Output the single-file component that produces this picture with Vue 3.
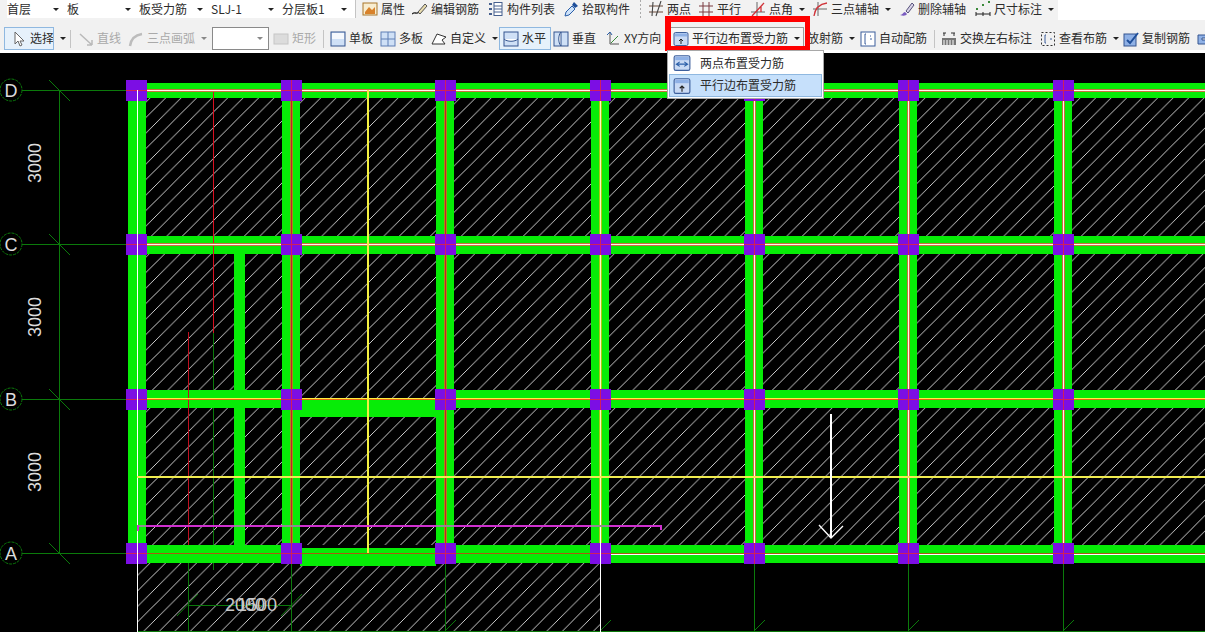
<template>
  <div class="page">
    <div class="row row1">
      <template v-for="(it, i) in row1" :key="i">
        <div v-if="it.sep" class="sep" :class="it.sep" :style="{ width: it.w + 'px' }"></div>
        <div v-else class="item" :class="{ combo: it.combo }" :style="{ width: it.w + 'px' }">
          <svg v-if="it.icon" class="ico" viewBox="0 0 16 16"><g v-html="icons[it.icon]"></g></svg>
          <span>{{ it.t }}</span>
          <i v-if="it.arrow" class="arrow" :class="{ right: it.combo }"></i>
        </div>
      </template>
      <div class="row1-end"></div>
    </div>
    <div class="row row2">
      <template v-for="(it, i) in row2" :key="i">
        <div v-if="it.sep" class="sep" :style="{ width: it.w + 'px' }"></div>
        <div v-else-if="it.input" class="input" :style="{ width: it.w + 'px' }"><i class="arrow grey"></i></div>
        <div
          v-else
          class="item"
          :class="{ active: it.active, off: it.off, open: it.open }"
          :style="{ width: it.w + 'px', paddingLeft: (it.pad || 0) + 'px' }"
        >
          <svg v-if="it.icon" class="ico" viewBox="0 0 16 16"><g v-html="icons[it.icon]"></g></svg>
          <span v-if="it.t">{{ it.t }}</span>
          <i v-if="it.arrow" class="arrow" :class="{ grey: it.off }"></i>
        </div>
      </template>
    </div>

    <svg class="canvas" viewBox="0 53 1205 579" shape-rendering="crispEdges">
      <defs>
        <pattern id="hatch" patternUnits="userSpaceOnUse" width="15.5" height="15.5">
          <line x1="-1" y1="16.5" x2="16.5" y2="-1" stroke="#e4e4e4" stroke-width="0.9" shape-rendering="auto" />
        </pattern>
      </defs>
      <rect x="137" y="98" width="1068" height="447" fill="url(#hatch)" />
      <rect x="137" y="563" width="463" height="69" fill="url(#hatch)" />

      <!-- axes -->
      <g stroke="#0b7a0b" fill="none">
        <line v-for="y in rowsY" :key="'ax' + y" x1="0" :y1="y + 0.5" x2="130" :y2="y + 0.5" />
        <line v-for="y in rowsY" :key="'tk' + y" x1="49" :y1="y - 10" x2="70" :y2="y + 11" shape-rendering="auto" />
        <line x1="59.5" y1="90" x2="59.5" y2="553" />
        <line x1="137" y1="631.5" x2="1205" y2="631.5" />
        <line v-for="x in [291, 445, 754, 908, 1063]" :key="'b' + x" :x1="x + 0.5" y1="560" :x2="x + 0.5" y2="632" />
        <line x1="188.5" y1="545" x2="188.5" y2="632" />
        <line x1="213.5" y1="333" x2="213.5" y2="570" />
        <line x1="188" y1="605.5" x2="291" y2="605.5" />
        <line x1="177" y1="616" x2="198" y2="594" shape-rendering="auto" />
        <line x1="281" y1="616" x2="302" y2="594" shape-rendering="auto" />
        <line v-for="x in [445, 600, 754, 908, 1063]" :key="'d' + x" :x1="x" y1="631" :x2="x + 11" y2="620" shape-rendering="auto" />
      </g>

      <!-- beams -->
      <g fill="#07ec07">
        <rect v-for="x in colsX" :key="'cb' + x" :x="x - 9" y="83" width="18" height="480" />
        <rect x="128" y="83" width="1077" height="15" />
        <rect v-for="y in [236, 390, 545]" :key="'rb' + y" x="128" :y="y" width="1077" height="18" />
        <rect x="234" y="254" width="11" height="291" />
        <rect x="300" y="390" width="136" height="27" fill="#000" />
        <rect x="300" y="390" width="136" height="9" fill="url(#hatch)" />
        <rect x="300" y="400" width="136" height="17" />
        <rect x="300" y="545" width="136" height="21" fill="#000" />
        <rect x="300" y="548" width="136" height="18" />
      </g>

      <!-- thin axis lines over the beams -->
      <rect x="188" y="332" width="1" height="213" fill="#c01020" />
      <rect x="213" y="90" width="1" height="243" fill="#d81020" />
      <rect x="137" y="89" width="1068" height="3" fill="#c87040" />
      <rect x="137" y="90" width="1068" height="1" fill="#fff8ee" />
      <rect x="137" y="243" width="1068" height="3" fill="#c87040" />
      <rect x="137" y="244" width="1068" height="1" fill="#fff8ee" />
      <rect x="137" y="398" width="1068" height="2" fill="#e06a10" />
      <rect x="137" y="398" width="1068" height="1" fill="#fff040" />
      <rect x="137" y="553" width="463" height="1" fill="#a85a10" />
      <rect x="600" y="553" width="605" height="1" fill="#a85a10" />
      <rect x="600" y="554" width="605" height="1" fill="#fff" />

      <g v-for="c in colLines" :key="'cl' + c.x">
        <rect :x="c.x - 1" y="90" width="3" height="463" :fill="c.edge" />
        <rect :x="c.x" y="90" width="1" height="463" :fill="c.core" />
      </g>

      <rect v-for="p in purple" :key="p.k" :x="p.x" :y="p.y" width="21" height="21" fill="#7c0ee4" />
      <template v-for="p in purple" :key="'m' + p.k">
        <rect v-if="p.cx !== 137" :x="p.x + 10" :y="p.y" width="1" height="21" fill="#d0205a" />
        <rect :x="p.x" :y="p.y + 10" width="21" height="1" fill="#d0205a" />
      </template>

      <rect x="137" y="90" width="1" height="542" fill="#fff" />
      <rect x="600" y="500" width="1" height="132" fill="#fff" />

      <!-- yellow and magenta guides -->
      <rect x="367" y="90" width="2" height="463" fill="#f4f040" />
      <rect x="137" y="476" width="1068" height="2" fill="#f0ec50" />
      <rect x="137" y="525" width="524" height="2" fill="#d030d0" />
      <rect x="660" y="525" width="2" height="5" fill="#d030d0" />
      <rect x="137" y="525" width="2" height="6" fill="#d030d0" />
      <rect v-for="s in greySpans" :key="'g' + s[0]" :x="s[0]" y="525" :width="s[1]" height="2" fill="#8f8f8f" />

      <!-- load arrow -->
      <g stroke="#fff" stroke-width="1.4" fill="none">
        <line x1="831" y1="414" x2="831" y2="538" />
        <polyline points="819,525 831,538 843,526" shape-rendering="auto" />
      </g>

      <!-- axis bubbles -->
      <g v-for="a in bubbles" :key="a.t">
        <circle cx="11" :cy="a.y" r="11" fill="#000" stroke="#0b7a0b" stroke-dasharray="3 1" shape-rendering="auto" />
        <text x="11" :y="a.y + 7" class="axis-t" text-anchor="middle">{{ a.t }}</text>
      </g>
      <text v-for="y in [163, 317, 472]" :key="'dim' + y" class="axis-t" text-anchor="middle" :transform="'translate(41 ' + y + ') rotate(-90)'">3000</text>
      <text x="225" y="611" class="dim-t">2000</text>
      <text x="237" y="611" class="dim-t">1500</text>
    </svg>

    <div class="red-box"></div>
    <div class="menu">
      <div class="menu-item">
        <svg class="ico" viewBox="0 0 16 16"><g v-html="icons.twoPoint"></g></svg>
        <span>两点布置受力筋</span>
      </div>
      <div class="menu-item sel">
        <svg class="ico" viewBox="0 0 16 16"><g v-html="icons.parallelEdge"></g></svg>
        <span>平行边布置受力筋</span>
      </div>
    </div>
  </div>
</template>

<script setup>
const colsX = [137, 291, 445, 600, 754, 908, 1063]
const rowsY = [90, 244, 399, 553]

const purple = []
for (const x of colsX) {
  for (const y of rowsY) {
    purple.push({ k: x + '-' + y, cx: x, x: x - 11 + (x === 137 ? 0 : 1), y: y === 553 ? 543 : y - 10 })
  }
}

// x, width of the magenta guide where it crosses a beam
const greySpans = [[139, 7], [234, 11], [282, 18], [436, 18], [591, 18]]

const colLines = [
  { x: 291, edge: '#a89010', core: '#c02030' },
  { x: 445, edge: '#a89010', core: '#c02030' },
  { x: 600, edge: '#a8c810', core: '#fff8c0' },
  { x: 754, edge: '#c87040', core: '#fff8ee' },
  { x: 908, edge: '#c87040', core: '#fff8ee' },
  { x: 1063, edge: '#c87040', core: '#fff8ee' }
]

const bubbles = [
  { t: 'D', y: 90 },
  { t: 'C', y: 244 },
  { t: 'B', y: 399 },
  { t: 'A', y: 553 }
]

const row1 = [
  { t: '首层', w: 60, arrow: true, combo: true },
  { t: '板', w: 72, arrow: true, combo: true },
  { t: '板受力筋', w: 72, arrow: true, combo: true },
  { t: 'SLJ-1', w: 71, arrow: true, combo: true },
  { t: '分层板1', w: 73, arrow: true, combo: true },
  { sep: 'line', w: 7 },
  { t: '属性', icon: 'prop', w: 50 },
  { t: '编辑钢筋', icon: 'pen', w: 76 },
  { t: '构件列表', icon: 'list', w: 75 },
  { t: '拾取构件', icon: 'dropper', w: 77 },
  { sep: 'grip', w: 8 },
  { t: '两点', icon: 'axisTwo', w: 50 },
  { t: '平行', icon: 'axisPar', w: 52 },
  { t: '点角', icon: 'axisAngle', w: 62, arrow: true },
  { t: '三点辅轴', icon: 'axisArc', w: 87, arrow: true },
  { t: '删除辅轴', icon: 'brush', w: 76 },
  { t: '尺寸标注', icon: 'dimen', w: 83, arrow: true }
]

const row2 = [
  { t: '选择', icon: 'cursor', w: 50, active: true, pad: 6 },
  { w: 16, arrow: true, pad: 0 },
  { sep: true, w: 8 },
  { t: '直线', icon: 'line', w: 50, off: true },
  { t: '三点画弧', icon: 'arc', w: 84, arrow: true, off: true },
  { input: true, w: 57 },
  { t: '矩形', icon: 'rect', w: 54, off: true, pad: 4 },
  { sep: true, w: 7 },
  { t: '单板', icon: 'single', w: 50 },
  { t: '多板', icon: 'multi', w: 51 },
  { t: '自定义', icon: 'custom', w: 68, arrow: true },
  { t: '水平', icon: 'horiz', w: 52, active: true, pad: 3 },
  { t: '垂直', icon: 'vert', w: 54, pad: 2 },
  { t: 'XY方向', icon: 'xy', w: 66 },
  { t: '平行边布置受力筋', icon: 'parallelEdge', w: 133, pad: 2, arrow: true, open: true },
  { t: '放射筋', w: 56, arrow: true, pad: 3 },
  { t: '自动配筋', icon: 'auto', w: 74 },
  { sep: true, w: 7 },
  { t: '交换左右标注', icon: 'swap', w: 99 },
  { t: '查看布筋', icon: 'view', w: 83, arrow: true },
  { t: '复制钢筋', icon: 'copy', w: 74 },
  { icon: 'copy2', w: 8 }
]

const tile = '<rect x="1" y="1.5" width="14" height="13" rx="1.5" fill="#c9daf4" stroke="#3d5f9c"/><rect x="2" y="2.5" width="12" height="3" fill="#8fb1e6"/>'

const icons = {
  prop: '<rect x="1" y="2" width="14" height="12" fill="#f8edd0" stroke="#a9772a"/><path d="M3 11l4-5 3 3 3-3v7H3z" fill="#d9822b"/>',
  pen: '<path d="M0 13c3-3 4 1 7-2" fill="none" stroke="#222" stroke-width="1.3"/><path d="M6 11l7-8 2 2-7 8z" fill="#e9dcae" stroke="#555"/>',
  list: '<g fill="#46608f"><rect x="1" y="2" width="3" height="2"/><rect x="1" y="7" width="3" height="2"/><rect x="1" y="12" width="3" height="2"/></g><rect x="6" y="1.5" width="8" height="13" fill="#fff" stroke="#46608f"/><path d="M6 5h8M6 8h8M6 11h8" stroke="#46608f"/>',
  dropper: '<path d="M2 15l1-4 6-6 3 3-6 6z" fill="#cfe3fa" stroke="#2a5ea8"/><path d="M9 4l2-3 4 4-3 2z" fill="#1f4f9a"/>',
  axisTwo: '<path d="M1 5h14M1 11h14" stroke="#6b4a3a"/><path d="M5 1L4 15M13 0L8 15" stroke="#444" stroke-width="1.1"/>',
  axisPar: '<path d="M1 5h14M1 11h14" stroke="#7a3a40"/><path d="M5 1v14M11 1v14" stroke="#7a3a40"/>',
  axisAngle: '<path d="M1 11h14M7 1v14" stroke="#666"/><path d="M2 15L14 2M11 5v6" stroke="#d0343a" stroke-width="1.3"/>',
  axisArc: '<path d="M1 8h14M6 1v14" stroke="#666"/><path d="M2 15C3 7 8 3 15 2" fill="none" stroke="#d0343a" stroke-width="1.3"/>',
  brush: '<path d="M1 14c3 0 3-3 5-3l2 2c-1 2-4 2-7 1z" fill="#7a5cc0"/><path d="M7 10l6-8 2 2-6 8z" fill="#d8d3e8" stroke="#55507a"/>',
  dimen: '<path d="M1 13h14M1 11v4M15 11v4M8 11v4" stroke="#222"/><g fill="#3a8a3a"><rect x="1" y="7" width="2" height="2"/><rect x="7" y="3" width="2" height="2"/><rect x="13" y="0" width="2" height="2"/></g>',
  cursor: '<path d="M4 1v12l3-3 2 5 2-1-2-4h4z" fill="#fff" stroke="#666"/>',
  line: '<path d="M2 3l12 11M14 14v-5M14 14H9" fill="none" stroke="#b9b9b9" stroke-width="1.5"/>',
  arc: '<path d="M2 15C3 8 7 4 14 3" fill="none" stroke="#bcbcbc" stroke-width="2.5"/>',
  rect: '<rect x="1" y="3" width="14" height="10" fill="#dcdcdc" stroke="#c6c6c6"/>',
  single: '<rect x="1" y="1" width="14" height="14" fill="#cfe0f6" stroke="#34558f"/><rect x="2" y="2" width="12" height="6" fill="#f5f8fd"/>',
  multi: '<rect x="1" y="1" width="14" height="14" fill="#cfe0f6" stroke="#5f7fb5"/><path d="M8 1v14M1 8h14" stroke="#5f7fb5"/>',
  custom: '<path d="M1 13L6 3l9 3-4 3 3 4z" fill="#fff" stroke="#333"/>',
  horiz: '<rect x="1" y="1" width="14" height="14" fill="#cfe0f6" stroke="#34558f"/><path d="M1 8c3 3 11 3 14 0" fill="#fff" stroke="#34558f"/>',
  vert: '<rect x="1" y="1" width="14" height="14" fill="#cfe0f6" stroke="#34558f"/><path d="M8 1c-3 3-3 11 0 14z" fill="#fff" stroke="#34558f"/>',
  xy: '<path d="M5 2v11h9" fill="none" stroke="#555"/><path d="M2 4l3-3 2 3" fill="none" stroke="#2a5ea8"/><path d="M6 12l7-7" stroke="#3a8a3a"/>',
  parallelEdge: tile + '<path d="M8 13V8M6 10l2-2 2 2" fill="none" stroke="#222"/>',
  twoPoint: tile + '<path d="M3 9h10M6 7l-3 2 3 2M10 7l3 2-3 2" fill="none" stroke="#2a5ea8"/>',
  auto: '<rect x="1" y="1" width="14" height="14" fill="#fff" stroke="#3d5f9c"/><path d="M6 3H5v10h1M10 8h2M10 5h1" fill="none" stroke="#3d5f9c"/>',
  swap: '<path d="M1 7h14v7H1z" fill="#777"/><path d="M3 9v5M6 9v5M9 9v5M12 9v5" stroke="#fff"/><path d="M2 2h3M10 2h4M3 2v3M13 2v3" stroke="#333"/>',
  view: '<rect x="1.5" y="1.5" width="13" height="13" fill="none" stroke="#333" stroke-dasharray="2 2"/><path d="M6 4H5v8h1M10 8h2" fill="none" stroke="#3d5f9c"/>',
  copy: '<rect x="1" y="3" width="12" height="12" fill="#8fb1e6" stroke="#34558f"/><path d="M4 9l3 3 8-10" fill="none" stroke="#1f4f9a" stroke-width="2"/>',
  copy2: '<path d="M1 4h12v3H5v2h8v4H1z" fill="#8fb1e6" stroke="#34558f"/>'
}
</script>

<style>
html, body { background: #000; overflow: hidden; }
</style>

<style scoped>
.page {
  position: relative;
  width: 1205px;
  height: 632px;
  overflow: hidden;
  background: #000;
  font-family: "Noto Sans CJK SC", "Liberation Sans", sans-serif;
  font-size: 12px;
  color: #2c2c2c;
}

.row {
  display: flex;
  align-items: center;
}

.row1 {
  height: 20px;
  padding-left: 7px;
  background: #f2f2f2;
  box-sizing: border-box;
  padding-bottom: 2px;
}

.row2 {
  height: 33px;
  padding-left: 4px;
  padding-top: 7px;
  padding-bottom: 3px;
  box-sizing: border-box;
  background: linear-gradient(#f1f1f1, #f1f1f1 30px, #fff 30px);
}

.row1-end {
  flex: 1;
  align-self: stretch;
  margin-bottom: -2px;
  background: #fff;
}

.item {
  display: flex;
  align-items: center;
  flex: none;
  height: 23px;
  box-sizing: border-box;
  white-space: nowrap;
  overflow: hidden;
}

.item span {
  padding-bottom: 2px;
}

.row1 .item {
  height: 18px;
}

.item.combo {
  background: #fff;
}

.item.active {
  border: 1px solid #8fb8e0;
  background: #e6f1fb;
}

.item.open {
  border: 1px solid #9a9a9a;
  border-left: none;
  background: #f6f6f6;
}

.item.off {
  color: #a9a9a9;
}

.ico {
  flex: none;
  width: 16px;
  height: 16px;
  margin-right: 3px;
}

.arrow {
  flex: none;
  width: 0;
  height: 0;
  margin-left: 6px;
  border-left: 3px solid transparent;
  border-right: 3px solid transparent;
  border-top: 3px solid #222;
}

.arrow.grey {
  border-top-color: #888;
}

.arrow.right {
  margin-left: auto;
  margin-right: 8px;
}

.sep {
  flex: none;
  align-self: stretch;
}

.sep::before {
  content: "";
  display: block;
  width: 1px;
  height: 18px;
  margin-top: 3px;
  background: #c4c4c4;
}

.row1 .sep.line::before {
  margin-top: 0;
}

.row1 .sep.grip::before {
  margin-top: 0;
  background: repeating-linear-gradient(#aaa, #aaa 2px, transparent 2px, transparent 4px);
}

.input {
  flex: none;
  display: flex;
  align-items: center;
  justify-content: flex-end;
  height: 23px;
  padding-right: 5px;
  box-sizing: border-box;
  border: 1px solid #8a8a8a;
  background: #fff;
}

.canvas {
  display: block;
  width: 1205px;
  height: 579px;
  background: #000;
}

.axis-t {
  font-family: "Liberation Sans", sans-serif;
  font-size: 18px;
  fill: #dcdcdc;
}

.dim-t {
  font-family: "Liberation Sans", sans-serif;
  font-size: 18px;
  fill: #c8c8c8;
}

.red-box {
  position: absolute;
  left: 665px;
  top: 16px;
  width: 145px;
  height: 35px;
  box-sizing: border-box;
  border: 6px solid #f00;
  border-right-width: 5px;
  border-bottom-width: 5px;
}

.menu {
  position: absolute;
  left: 667px;
  top: 50px;
  width: 157px;
  height: 49px;
  box-sizing: border-box;
  padding: 1px;
  border: 1px solid #a8a8a8;
  background: #fff;
}

.menu-item {
  display: flex;
  align-items: center;
  height: 22px;
  padding-left: 4px;
  box-sizing: border-box;
}

.menu-item span {
  padding-bottom: 2px;
}

.menu-item .ico {
  width: 18px;
  height: 18px;
  margin-right: 9px;
}

.menu-item.sel {
  height: 23px;
  background: #c6e0fb;
  border: 1px solid #8fb8e0;
  padding-left: 3px;
}
</style>
